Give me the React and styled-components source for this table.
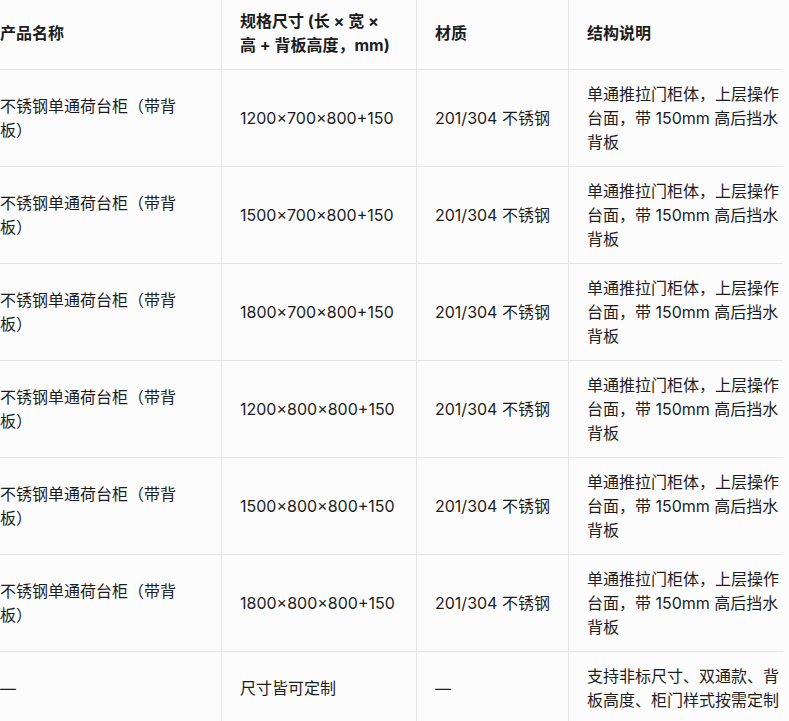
import React from "react";
import styled, { createGlobalStyle } from "styled-components";

const GlobalStyle = createGlobalStyle`
  html, body {
    margin: 0;
    padding: 0;
    background: #fcfcfc;
  }
  body {
    font-family: Inter, "Noto Sans CJK SC", sans-serif;
    color: #1c1c1c;
    text-spacing-trim: space-all;
  }
`;

const Scroller = styled.div`
  width: 783px;
  height: 721px;
  overflow: hidden;
`;

const Table = styled.table`
  border-collapse: collapse;
  table-layout: fixed;
  width: 824px;
  margin-left: -19px;
  margin-top: -3px;
  font-size: 16px;
  line-height: 24px;
`;

const Col = styled.col`
  width: ${p => p.$w}px;
`;

const HeadCell = styled.th`
  text-align: left;
  font-weight: 700;
  padding: 12px 18px;
  border: 1px solid #e6e6e6;
  border-top: none;
  vertical-align: middle;
`;

const Cell = styled.td`
  padding: 12px 18px;
  border: 1px solid #e6e6e6;
  vertical-align: middle;
  font-weight: 400;
`;

const rows = [
  ["不锈钢单通荷台柜（带背板）", "1200×700×800+150", "201/304 不锈钢", "单通推拉门柜体，上层操作台面，带 150mm 高后挡水背板"],
  ["不锈钢单通荷台柜（带背板）", "1500×700×800+150", "201/304 不锈钢", "单通推拉门柜体，上层操作台面，带 150mm 高后挡水背板"],
  ["不锈钢单通荷台柜（带背板）", "1800×700×800+150", "201/304 不锈钢", "单通推拉门柜体，上层操作台面，带 150mm 高后挡水背板"],
  ["不锈钢单通荷台柜（带背板）", "1200×800×800+150", "201/304 不锈钢", "单通推拉门柜体，上层操作台面，带 150mm 高后挡水背板"],
  ["不锈钢单通荷台柜（带背板）", "1500×800×800+150", "201/304 不锈钢", "单通推拉门柜体，上层操作台面，带 150mm 高后挡水背板"],
  ["不锈钢单通荷台柜（带背板）", "1800×800×800+150", "201/304 不锈钢", "单通推拉门柜体，上层操作台面，带 150mm 高后挡水背板"],
  ["—", "尺寸皆可定制", "—", "支持非标尺寸、双通款、背板高度、柜门样式按需定制"]
];

export default function App() {
  return (
    <Scroller>
      <GlobalStyle />
      <Table>
        <colgroup>
          <Col $w={240} />
          <Col $w={195} />
          <Col $w={152} />
          <Col $w={237} />
        </colgroup>
        <thead>
          <tr>
            <HeadCell>产品名称</HeadCell>
            <HeadCell>规格尺寸 (长 × 宽 × 高 + 背板高度，mm)</HeadCell>
            <HeadCell>材质</HeadCell>
            <HeadCell>结构说明</HeadCell>
          </tr>
        </thead>
        <tbody>
          {rows.map((r, i) => (
            <tr key={i}>
              {r.map((c, j) => (
                <Cell key={j}>{c}</Cell>
              ))}
            </tr>
          ))}
        </tbody>
      </Table>
    </Scroller>
  );
}
